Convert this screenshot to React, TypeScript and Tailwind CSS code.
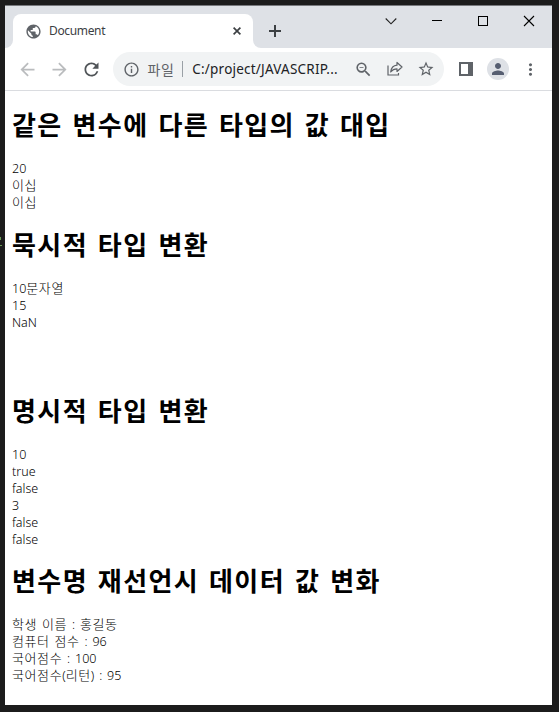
import { ReactNode } from "react";
import {
  MdArrowBack,
  MdArrowForward,
  MdInfoOutline,
  MdMoreVert,
  MdPerson,
  MdPublic,
  MdRefresh,
  MdStarBorder,
  MdZoomOut,
} from "react-icons/md";

const Heading = ({ children }: { children: ReactNode }) => (
  <h1 className="h-[34px] whitespace-nowrap font-['Noto_Sans_CJK_KR',sans-serif] text-[26px] leading-[34px] font-bold tracking-[1.4px] [word-spacing:2.6px]">
    {children}
  </h1>
);

const Lines = ({ items }: { items: string[] }) => (
  <div className="mt-[19px] text-[12.5px] leading-[17px] font-light [word-spacing:1.6px]">
    {items.map((item, index) => (
      <p key={index} className="h-[17px] whitespace-nowrap">
        {item.split(/([가-힣]+)/).map((part, i) =>
          /[가-힣]/.test(part) ? (
            <span key={i} className="text-[13px] tracking-[0.6px]">
              {part}
            </span>
          ) : (
            part
          )
        )}
      </p>
    ))}
  </div>
);

const ShareIcon = () => (
  <svg width="16" height="16" viewBox="0 0 16 16" fill="none" stroke="#5f6368" strokeWidth="1.2">
    <path d="M1 4.500v9.500h10.500V12" />
    <path d="M10 1.500v2.700C6 4.500 4.200 7 3.700 11c1.600-2.200 3.400-3.200 6.300-3.200v2.700L15 6z" strokeLinejoin="round" />
  </svg>
);

const WindowButtons = () => (
  <div className="ml-auto flex h-[29px] text-black">
    <div className="flex w-[46px] items-center justify-center">
      <svg width="12" height="12" fill="none" stroke="#222" strokeWidth="1.1">
        <path d="M.7 3.500 6 8.800l5.300-5.300" />
      </svg>
    </div>
    <div className="flex w-[46px] items-center justify-center">
      <span className="h-px w-[10px] bg-black" />
    </div>
    <div className="flex w-[46px] items-center justify-center">
      <span className="size-[10px] border border-black" />
    </div>
    <div className="flex w-[46px] items-center justify-center">
      <svg width="12" height="12" stroke="#000" strokeWidth="1.1">
        <path d="m1 1 10 10M11 1 1 11" />
      </svg>
    </div>
  </div>
);

const TabStrip = () => (
  <div className="flex h-[43px] border-t border-[#77797d] bg-[#dee1e6]">
    <div className="flex w-2 items-end bg-white">
      <span className="h-[42px] w-2 rounded-br-lg bg-[#dee1e6]" />
    </div>
    <div className="mt-2 flex w-[240px] items-center rounded-t-lg bg-white pr-3 pl-[12px] text-[#3c4043]">
      <MdPublic size={17} className="text-[#5f6368]" />
      <span className="ml-[7px] text-[12px] tracking-[-0.35px]">Document</span>
      <svg width="8" height="8" className="ml-auto" stroke="currentColor" strokeWidth="1.7">
        <path d="m.6.6 6.800 6.800M7.400.6.6 7.400" />
      </svg>
    </div>
    <div className="flex w-2 items-end bg-white">
      <span className="h-[42px] w-2 rounded-bl-lg bg-[#dee1e6]" />
    </div>
    <div className="ml-2 flex items-center pt-2 text-[#3c4043]">
      <svg width="12" height="12" stroke="currentColor" strokeWidth="2">
        <path d="M6 0v12M0 6h12" />
      </svg>
    </div>
    <WindowButtons />
  </div>
);

const Toolbar = () => (
  <div className="flex h-[43px] items-center border-b border-[#dadce0] bg-white pl-3 text-[#5f6368]">
    <MdArrowBack size={21} className="text-[#babcbe]" />
    <MdArrowForward size={21} className="ml-[11px] text-[#babcbe]" />
    <MdRefresh size={21} className="ml-[11px] text-[#505458]" />
    <div className="ml-[11px] flex h-[34px] w-[331px] items-center rounded-full bg-[#f1f3f4] pr-[9px] pl-[9.500px]">
      <MdInfoOutline size={17} />
      <span className="ml-[8px] text-[14px] tracking-[0.5px]">파일</span>
      <span className="ml-[8px] h-4 w-px bg-[#9aa0a6]" />
      <span className="ml-[9px] text-[13.500px] tracking-[0.22px] text-[#202124]">C:/project/JAVASCRIP...</span>
      <div className="ml-auto flex items-center">
        <MdZoomOut size={19} className="-translate-x-[3px]" />
        <span className="mr-[14px] ml-[11px]">
          <ShareIcon />
        </span>
        <MdStarBorder size={18} />
      </div>
    </div>
    <svg width="14" height="14" className="ml-[15px]">
      <path fill="#5f6368" fillRule="evenodd" d="M0 0h14v14H0zM2 2v10h7V2z" />
    </svg>
    <span className="ml-[14px] flex size-[22px] items-center justify-center rounded-full bg-[#dee1e6] text-[#565e71]">
      <MdPerson size={18} />
    </span>
    <MdMoreVert size={19} className="ml-[11.500px]" />
  </div>
);

export default function App() {
  return (
    <div className="relative h-[712px] w-[559px] overflow-hidden bg-[#1c1c1c] pt-[5px] pl-[5px] font-['Noto_Sans','Noto_Sans_CJK_KR',sans-serif]">
      {/* Editor text showing behind the window */}
      <span className="absolute top-[237px] left-0 h-[3px] w-px bg-[#6a9955]" />
      <span className="absolute top-[245px] left-0 h-px w-[2px] bg-[#6a9955]" />

      {/* Browser window */}
      <div className="flex h-[700px] w-[547px] flex-col bg-white">
        <TabStrip />
        <Toolbar />

        {/* Page */}
        <main className="px-[7px] pt-4 text-black">
          <Heading>같은 변수에 다른 타입의 값 대입</Heading>
          <Lines items={["20", "이십", "이십"]} />
          <div className="mt-4">
            <Heading>묵시적 타입 변환</Heading>
            <Lines items={["10문자열", "15", "NaN"]} />
          </div>
          <div className="mt-[62px]">
            <Heading>명시적 타입 변환</Heading>
            <Lines items={["10", "true", "false", "3", "false", "false"]} />
          </div>
          <div className="mt-[15px]">
            <Heading>변수명 재선언시 데이터 값 변화</Heading>
            <Lines
              items={[
                "학생 이름 : 홍길동",
                "컴퓨터 점수 : 96",
                "국어점수 : 100",
                "국어점수(리턴) : 95",
              ]}
            />
          </div>
        </main>
      </div>
    </div>
  );
}
